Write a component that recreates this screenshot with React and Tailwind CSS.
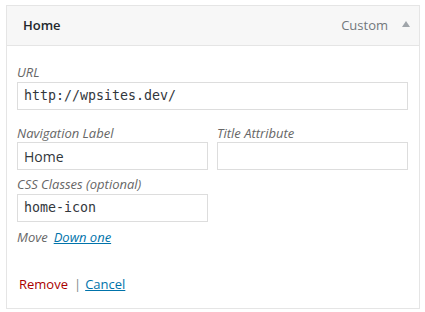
import React from 'react';

const sans = { fontFamily: '"Open Sans", "Noto Sans", sans-serif' };
const mono = { fontFamily: '"DejaVu Sans Mono", "Liberation Mono", monospace' };

function Field({ label, value, className = '' }) {
  return (
    <div className={className}>
      <div className="text-[13px] leading-[18px] italic text-[#666]">{label}</div>
      <div
        className="h-[28px] mt-px border border-[#ddd] bg-white px-[6px] flex items-center text-[13.3px] text-[#32373c]"
        style={mono}
      >
        {value}
      </div>
    </div>
  );
}

export default function App() {
  return (
    <div className="min-h-screen bg-white pt-[5px] pl-[6px]" style={sans}>
      <div className="w-[414px] h-[304px] border border-[#e5e5e5] bg-white flex flex-col">
        <div className="h-[40px] border-b border-[#e5e5e5] bg-[#f7f7f7] flex items-center pl-[16px] pr-[9px]">
          <span className="text-[13px] font-semibold text-[#23282d]">Home</span>
          <span className="ml-auto text-[13px] text-[#72777c]">Custom</span>
          <svg width="8" height="6" viewBox="0 0 8 6" className="ml-[14px] -mt-[4px]">
            <path d="M4 0 L8 6 L0 6 Z" fill="#a0a5aa" />
          </svg>
        </div>

        <div className="pl-[10px] pr-[11px] pt-[17px] flex-1 flex flex-col">
          <Field label="URL" value="http://wpsites.dev/" />

          <div className="flex gap-[9px] mt-[14px]">
            <div className="w-[191px]">
              <div className="text-[13px] leading-[18px] italic text-[#666]">Navigation Label</div>
              <div className="h-[28px] border border-[#ddd] bg-white px-[6px] flex items-center text-[14px] text-[#32373c]">
                Home
              </div>
            </div>
            <div className="w-[191px]">
              <div className="text-[13px] leading-[18px] italic text-[#666]">Title Attribute</div>
              <div className="h-[28px] border border-[#ddd] bg-white" />
            </div>
          </div>

          <Field label="CSS Classes (optional)" value="home-icon" className="w-[191px] mt-[5px]" />

          <div className="mt-[6px] text-[13px] leading-[18px] italic flex gap-[6px]">
            <span className="text-[#666]">Move</span>
            <a href="#" className="text-[#0073aa] underline">Down one</a>
          </div>

          <div className="mt-[29px] pl-[2px] text-[13px] leading-[18px] flex items-center">
            <a href="#" className="text-[#a00]">Remove</a>
            <span className="text-[#82878c] ml-[6px] mr-[4px]">|</span>
            <a href="#" className="text-[#0073aa] underline">Cancel</a>
          </div>
        </div>
      </div>
    </div>
  );
}
